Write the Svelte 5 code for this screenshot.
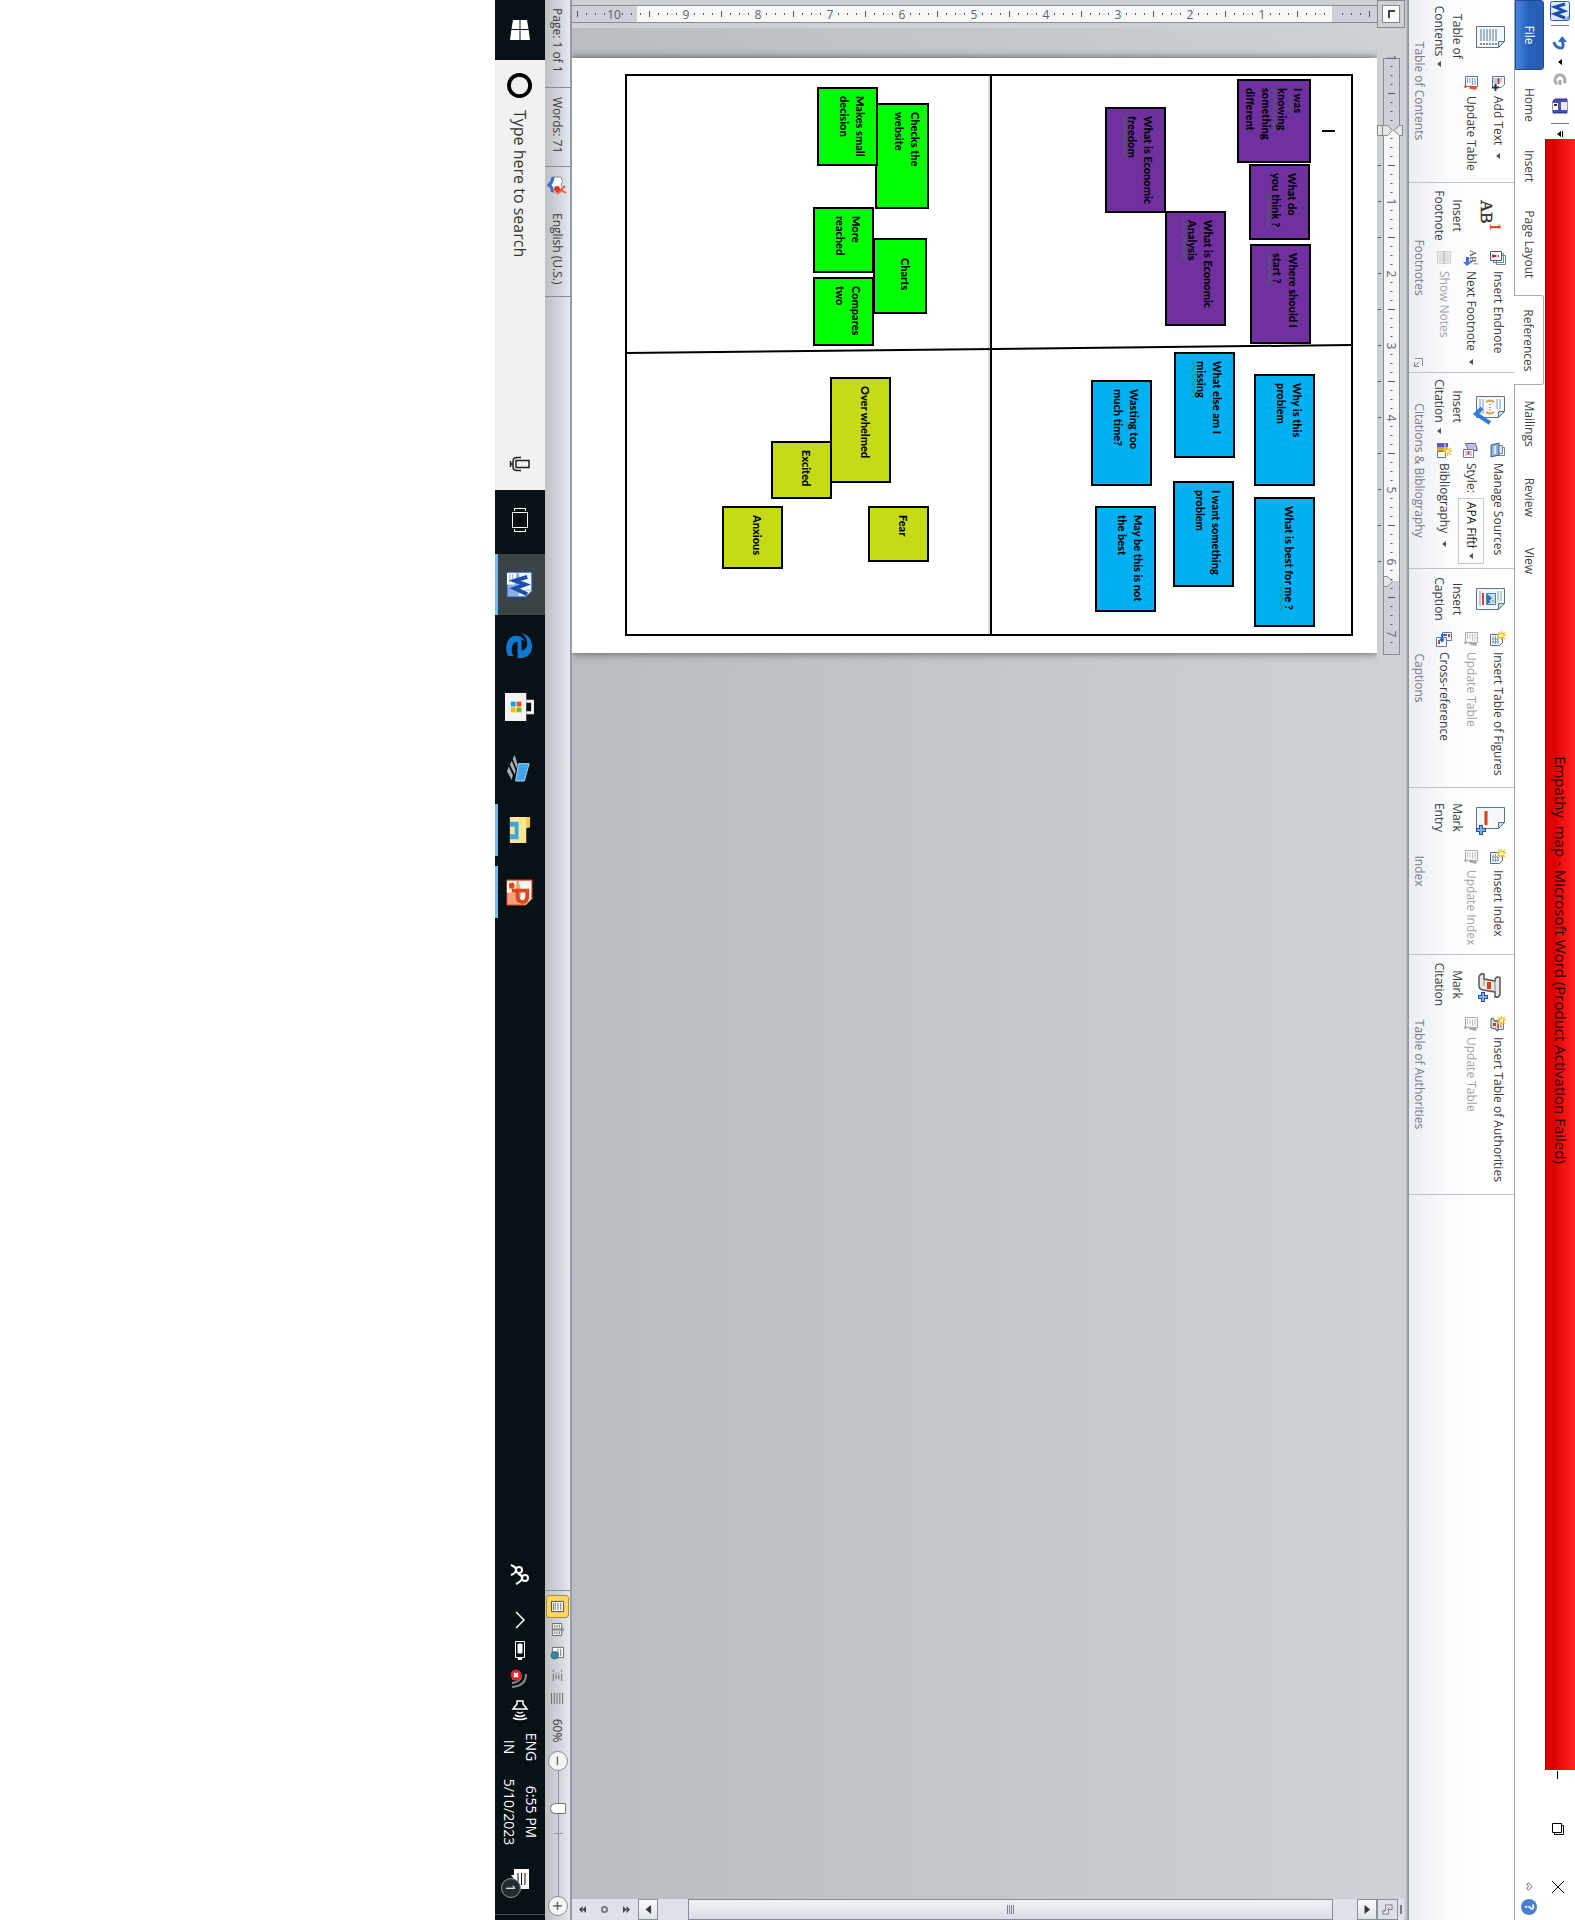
<script>
  const tabs = ['Home', 'Insert', 'Page Layout', 'References', 'Mailings', 'Review', 'View'];

  const groups = [
    {
      title: 'Table of Contents', width: 183, lead: 73, icon: 'toc', label: ['Table of', 'Contents'], menu: true,
      items: [{ icon: 'addtext', text: 'Add Text', menu: true }, { icon: 'update', text: 'Update Table' }]
    },
    {
      title: 'Footnotes', width: 190, lead: 65, icon: 'ab', label: ['Insert', 'Footnote'], launcher: true,
      items: [
        { icon: 'endnote', text: 'Insert Endnote' },
        { icon: 'next', text: 'Next Footnote', menu: true },
        { icon: 'notes', text: 'Show Notes', off: true }
      ]
    },
    {
      title: 'Citations & Bibliography', width: 196, lead: 67, icon: 'citation', label: ['Insert', 'Citation'], menu: true,
      items: [
        { icon: 'sources', text: 'Manage Sources' },
        { icon: 'style', text: 'Style:', select: true },
        { icon: 'biblio', text: 'Bibliography', menu: true }
      ]
    },
    {
      title: 'Captions', width: 219, lead: 60, icon: 'caption', label: ['Insert', 'Caption'],
      items: [
        { icon: 'figures', text: 'Insert Table of Figures' },
        { icon: 'update', text: 'Update Table', off: true },
        { icon: 'cross', text: 'Cross-reference' }
      ]
    },
    {
      title: 'Index', width: 167, lead: 59, icon: 'entry', label: ['Mark', 'Entry'],
      items: [{ icon: 'figures', text: 'Insert Index' }, { icon: 'update', text: 'Update Index', off: true }]
    },
    {
      title: 'Table of Authorities', width: 240, lead: 59, icon: 'scroll', label: ['Mark', 'Citation'],
      items: [{ icon: 'authorities', text: 'Insert Table of Authorities' }, { icon: 'update', text: 'Update Table', off: true }]
    }
  ];

  // x, y, w, h are board coordinates; "~" marks words flagged by the grammar checker
  const notes = [
    { c: 'purple', x: 3, y: 40, w: 84, h: 74, lines: ['I ~was', '~knowing', 'something', 'different'] },
    { c: 'purple', x: 88, y: 41, w: 76, h: 61, lines: ['What do', 'you ~think ?'] },
    { c: 'purple', x: 168, y: 40, w: 100, h: 61, lines: ['Where should I', '~start ?'] },
    { c: 'purple', x: 31, y: 185, w: 106, h: 61, lines: ['What is Economic', '~freedom'] },
    { c: 'purple', x: 135, y: 125, w: 115, h: 61, lines: ['What is Economic', '~Analysis'] },
    { c: 'blue', x: 298, y: 36, w: 112, h: 61, lines: ['Why is this', 'problem'] },
    { c: 'blue', x: 421, y: 36, w: 130, h: 61, lines: ['What is best for ~me ?'] },
    { c: 'blue', x: 276, y: 116, w: 106, h: 61, lines: ['What else am I', '~missing'] },
    { c: 'blue', x: 405, y: 117, w: 106, h: 61, lines: ['I want something', 'problem'] },
    { c: 'blue', x: 304, y: 199, w: 106, h: 61, lines: ['Wasting too', 'much time?'] },
    { c: 'blue', x: 430, y: 195, w: 106, h: 61, lines: ['May be this is not', 'the best'] },
    { c: 'green', x: 27, y: 422, w: 106, h: 54, lines: ['Checks the', 'website'] },
    { c: 'green', x: 11, y: 473, w: 79, h: 61, lines: ['Makes small', 'decision'] },
    { c: 'green', x: 162, y: 424, w: 76, h: 54, lines: ['Charts'], indent: true },
    { c: 'green', x: 131, y: 477, w: 66, h: 61, lines: ['More', 'reached'] },
    { c: 'green', x: 201, y: 477, w: 69, h: 61, lines: ['Compares', 'two'] },
    { c: 'lime', x: 301, y: 460, w: 106, h: 61, lines: ['Over whelmed'] },
    { c: 'lime', x: 365, y: 519, w: 58, h: 61, lines: ['Excited'] },
    { c: 'lime', x: 430, y: 422, w: 56, h: 61, lines: ['Fear'] },
    { c: 'lime', x: 430, y: 568, w: 63, h: 61, lines: ['Anxious'] }
  ];

  const hTicks = Array.from({ length: 66 }, (_, i) => ({ at: 9 * i, kind: i % 8 }));
  const vTicks = Array.from({ length: 90 }, (_, i) => ({ at: 7 + 9 * i, n: (i - 4) / 8 }));
  const tabStops = Array.from({ length: 12 }, (_, i) => 108 + 36 * i);
  const views = ['print', 'reading', 'web', 'outline', 'draft'];
  let zoom = $state(60);
  let search = $state('');
</script>

{#snippet star()}
  <path d="M4 0v9M0 4.500h9M1 1l7 7M8 1l-7 7" stroke="#f2c530" stroke-width="1.500" /><rect x="3" y="3" width="3" height="3" fill="#fff3b0" />
{/snippet}

{#snippet small(name)}
  <svg class="i16" viewBox="0 0 16 16" fill="none" aria-hidden="true">
    {#if name === 'addtext'}
      <path d="M1.500 1.500h8l3 3v9h-11z" fill="#f5f9fe" stroke="#66788f" /><path d="M3 5h4M3 10h8M3 12h5" stroke="#7f9cc4" /><path d="M3 7.500h6" stroke="#d22" stroke-width="2" /><path d="M12.500 7v7M9 10.500h7" stroke="#2b3340" stroke-width="2" />
    {:else if name === 'update'}
      <path d="M1.500 1.500h10v12h-10z" fill="#f5f9fe" stroke="#66788f" /><path d="M3 4h7M3 6.500h7M3 9h5M3 11.500h5" stroke="#7f9cc4" /><path d="M13.500 2.500l-1.500 7M11.500 12.500v2" stroke="#e8502a" stroke-width="3" />
    {:else if name === 'endnote'}
      <path d="M5.500.5h9v9h-9zM3.500 2.500h9v10h-9z" fill="#fff" stroke="#6c82a6" /><path d="M1.500 4.500h9v11h-9z" fill="#fff" stroke="#44597c" /><path d="M6 7v1M6 9.500v3.500M4.500 13h3" stroke="#c22" stroke-width="2" />
    {:else if name === 'next'}
      <text x="0" y="9" font-family="Liberation Serif" font-size="9" fill="#222">AB</text><text x="12" y="5" font-family="Liberation Serif" font-size="7" fill="#e14a20">1</text><path d="M7 10h5v-3l4 5-4 4v-3h-5z" fill="#3f77cf" />
    {:else if name === 'notes'}
      <path d="M1.500 1.500h12v13h-12z" fill="#e8e8e8" stroke="#b5b5b5" /><path d="M3 4h9M3 6h9M3 10h9M3 12h9" stroke="#b9b0b3" /><path d="M1 8h13" stroke="#a9a9a9" stroke-width="2" />
    {:else if name === 'sources'}
      <path d="M5.500 1.500h8v8h-8z" fill="#fff" stroke="#6a84a8" /><path d="M3.500 3.500h8v8h-8z" fill="#eaf2fb" stroke="#6a84a8" /><path d="M1 7h12l2 8H3z" fill="#8fb1d8" stroke="#3e5f8a" /><path d="M4 11h8" stroke="#dbe8f6" stroke-width="2" />
    {:else if name === 'style'}
      <path d="M1.500 3.500l7-2v9l-7 3z" fill="#b9bfe6" stroke="#5b629c" /><path d="M7.500 5.500h8v10h-8z" fill="#fff" stroke="#6d7892" /><path d="M9 8h5M9 13h5" stroke="#8b98b4" /><path d="M9 10.500h4" stroke="#d33" stroke-width="2" />
    {:else if name === 'biblio'}
      <path d="M9.500 6.500h6v8h-6z" fill="#fff" stroke="#5f7393" /><rect x="1" y="4" width="4" height="11" fill="#5f59bd" /><rect x="5" y="4" width="4" height="11" fill="#d9a520" /><path d="M1 7h8" stroke="#fff6" stroke-width="2" /><g transform="translate(5 0)">{@render star()}</g>
    {:else if name === 'figures'}
      <path d="M3.500 3.500h8l3 3v9h-11z" fill="#fff" stroke="#54688a" /><path d="M5 8h8M5 10.500h8M5 13h8M8 7v7M11 7v7" stroke="#7f95bb" />{@render star()}
    {:else if name === 'cross'}
      <path d="M1.500.5h8v9h-8z" fill="#fff" stroke="#5b7bb2" /><path d="M6.500 5.500h9v10h-9z" fill="#fff" stroke="#5b7bb2" /><path d="M3 3h3" stroke="#e33" stroke-width="2" /><path d="M9 13h4" stroke="#e33" stroke-width="2" /><path d="M4 5v5h6M8 8l2 2-2 2" stroke="#2d68c8" stroke-width="2" />
    {:else if name === 'authorities'}
      <path d="M4.500 2.500h9v8h-9z" fill="#fff" stroke="#5b7bb2" /><path d="M7 5h5M7 7.500h5" stroke="#e33" /><path d="M5 8h10q0 2-2 2l-1 5H3q-2-1 0-3h2z" fill="#ddd" stroke="#555" /><path d="M7 11.500h3" stroke="#d63f1c" stroke-width="3" />{@render star()}
    {/if}
  </svg>
{/snippet}

{#snippet sheet()}
  <path d="M5.500 1.500h15l6 6v22h-21z" fill="#f4f9fe" stroke="#5d7389" /><path d="M20.500 1.500v6h6z" fill="#c8dcf2" stroke="#5d7389" />
{/snippet}

{#snippet big(name)}
  <svg class="i32" viewBox="0 0 32 32" fill="none" aria-hidden="true">
    {#if name === 'toc'}
      {@render sheet()}<path d="M8 10h12M8 13h12M8 16h12M8 19h12M8 22h12M8 25h12" stroke="#54718f" /><path d="M22 10h2M22 13h2M22 16h2M22 19h2M22 22h2M22 25h2" stroke="#222" />
    {:else if name === 'ab'}
      <text x="0" y="25" font-family="Liberation Serif" font-size="17" fill="#333" stroke="#333" stroke-width=".5">AB</text><text x="23" y="16" font-family="Liberation Serif" font-weight="bold" font-size="16" fill="#e14a20">1</text>
    {:else if name === 'citation'}
      {@render sheet()}<path d="M8 6h10M8 9h10M8 23h15M8 26h15" stroke="#7d9cc0" /><path d="M11 12q-3 4 0 8M21 12q3 4 0 8M13 16h1M16 16h1M18.500 16h1" stroke="#e79636" stroke-width="2" /><path d="M17 24l6 6 9-14" stroke="#2f7fdc" stroke-width="4" />
    {:else if name === 'caption'}
      {@render sheet()}<path d="M8 5h10M8 8h10M8 26h15" stroke="#7d9cc0" /><path d="M10.500 10.500h11v9h-11z" fill="#bfe3fa" stroke="#4c84b5" /><path d="M11 19l4-5 3 3 1-2 2 4z" fill="#2c6db0" /><circle cx="18" cy="13" r="1" fill="#e79636" /><path d="M10 23h12" stroke="#d8441e" stroke-width="2" />
    {:else if name === 'entry'}
      {@render sheet()}<path d="M9 20h14" stroke="#d9400f" stroke-width="3" /><path d="M28 20v10M23 25h10" stroke="#27509c" stroke-width="4" /><path d="M28 21v8M24 25h8" stroke="#7fb0f2" stroke-width="2" />
    {:else if name === 'scroll'}
      <path d="M10 6h15q4 1 3 5h-5l-2 12q-1 4-4 4H8q-4-1-3-5h5l2-11q-4 0-4-3t2-2z" fill="#e8e8e8" stroke="#555" stroke-width="1.500" /><path d="M12 11h11M10 22h7" stroke="#888" /><path d="M13 17h7" stroke="#d9400f" stroke-width="4" /><path d="M28 18v10M23 23h10" stroke="#27509c" stroke-width="4" /><path d="M28 19v8M24 23h8" stroke="#7fb0f2" stroke-width="2" />
    {/if}
  </svg>
{/snippet}

{#snippet office(letter, a, b)}
  <svg viewBox="0 0 28 28" class="i28" fill="none" aria-hidden="true">
    <path d="M1 1h19l7 7v19H1z" fill={b} stroke={a} /><path d="M2 2h17l7 7v6Q14 10 2 15z" fill="#f2f5fb" /><path d="M20 1v7h7z" fill="#fff" stroke={b} /><path d="M2 17l12 2v8H2z" fill="#fff" /><path d="M3 21h9M3 24h9" stroke={b} />
    {#if letter === 'W'}
      <path d="M6 6l4 13 4-11 4 11 6-13" stroke={a} stroke-width="4" />
    {:else}
      <path d="M12 22V6h6q6 0 6 5t-6 5h-5" stroke={a} stroke-width="4" /><circle cx="7" cy="22" r="3" fill={a} />
    {/if}
  </svg>
{/snippet}

<div class="stage">
  <main class="screen">
    <header class="title">
      <div class="quick">
        <svg class="wlogo" viewBox="0 0 20 20" fill="none" aria-hidden="true"><rect x=".5" y=".5" width="19" height="19" rx="2" fill="#dcebfa" stroke="#2a5db0" /><path d="M14 1h5v5z" fill="#7fa8dc" /><path d="M3 5l3 10 4-9 3 9 4-10" stroke="#1d4f9f" stroke-width="3" /></svg>
        <i></i>
        <button aria-label="Undo"><svg class="i16" viewBox="0 0 16 16" fill="none"><path d="M5 6q9-3 8 2-1 5-6 6" stroke="#3569be" stroke-width="3" /><path d="M1 6l6-5v9z" fill="#3569be" /></svg></button>
        <button aria-label="Undo list" class="arrow"><svg viewBox="0 0 6 4"><path d="M0 0h6L3 4z" /></svg></button>
        <button aria-label="Redo"><svg class="i16" viewBox="0 0 16 16" fill="none"><path d="M12 11a5 5 0 1 1-1-7M13 8h-5" stroke="#aaa" stroke-width="3" /></svg></button>
        <button aria-label="Save"><svg class="i16" viewBox="0 0 16 16"><path d="M1 1h14v14H3l-2-2z" fill="#4b50b8" stroke="#2d3180" /><path d="M4 1h8v6H4z" fill="#e9ecf8" /><path d="M5 10h7v5H5z" fill="#fff" /><path d="M6 11h2v3H6z" fill="#333" /></svg></button>
        <i></i>
        <button aria-label="Customize" class="arrow"><svg viewBox="0 0 6 6"><path d="M0 0h6v1H0zM0 2h6L3 6z" /></svg></button>
      </div>
      <h1>Empathy  map - Microsoft Word (Product Activation Failed)</h1>
      <div class="winbtns">
        <button aria-label="Minimize"><svg class="i12" viewBox="0 0 12 12"><path d="M4 6.500h8" stroke="#000" /></svg></button>
        <button aria-label="Restore"><svg class="i12" viewBox="0 0 12 12" fill="none" stroke="#000"><path d="M.5 2.500h9v9h-9zM2.500 2V.5h9v9H10" /></svg></button>
        <button aria-label="Close"><svg class="i12" viewBox="0 0 12 12" stroke="#000"><path d="M0 0l12 12M12 0L0 12" /></svg></button>
      </div>
    </header>

    <nav class="tabs">
      <button class="file">File</button>
      {#each tabs as tab}
        <button class="tab" class:active={tab === 'References'}>{tab}</button>
      {/each}
      <span class="fill"></span>
      <button class="mini" aria-label="Minimize ribbon"><svg viewBox="0 0 10 8" class="chev" fill="#fff" stroke="#555"><path d="M1 5l4-4 4 4-1.500 2L5 5 2.500 7z" /></svg></button>
      <button class="mini help" aria-label="Help">?</button>
    </nav>

    <section class="ribbon">
      {#each groups as g}
        <div class="group" style:width="{g.width}px" style:--lead="{g.lead}px">
          <button class="large">
            {@render big(g.icon)}
            <span>{g.label[0]}</span>
            <span>{g.label[1]}{#if g.menu}<b class="dd"></b>{/if}</span>
          </button>
          <div class="stack">
            {#each g.items as item}
              {#if item.select}
                <div class="row">
                  {@render small(item.icon)}
                  <label for="style">{item.text}</label>
                  <span class="pick"><select id="style"><option>APA Fifth Edition</option></select><b class="dd"></b></span>
                </div>
              {:else}
                <button class="row" class:off={item.off}>
                  {@render small(item.icon)}<span>{item.text}</span>{#if item.menu}<b class="dd"></b>{/if}
                </button>
              {/if}
            {/each}
          </div>
          <div class="caption">
            <span>{g.title}</span>
            {#if g.launcher}
              <button aria-label="Footnote options"><svg class="i9" viewBox="0 0 9 9" fill="none" stroke="#888"><path d="M.5 8V.5H8M4 4l4 4M8.500 4v4.500H4" /></svg></button>
            {/if}
          </div>
        </div>
      {/each}
    </section>

    <section class="work">
      <div class="corner"><button aria-label="Tab selector"><svg viewBox="0 0 10 10" fill="none"><path d="M2 1v6h7" stroke="#444" stroke-width="2" /></svg></button></div>
      <div class="top">
        <svg class="hruler" viewBox="0 0 600 27" fill="none">
          <rect x="1.500" y="4.500" width="596" height="16" fill="#cdd0d6" stroke="#868b94" />
          <rect x="73" y="5" width="451" height="15" fill="#f7f7f7" />
          {#each hTicks as t}
            {#if t.kind === 0}
              <text x={t.at + 1} y="17">{Math.abs(t.at / 72 - 1) || ''}</text>
            {:else if t.kind === 4}
              <path d="M{t.at + 0.5} 9v7" stroke="#555" />
            {:else}
              <path d="M{t.at} 12.500h1" stroke="#555" stroke-width="2" />
            {/if}
          {/each}
          {#each tabStops as s}<path d="M{s + .5} 23v3" stroke="#555" />{/each}
          <path d="M68.500 1.500h10v3l-5 6-5-6z M68.500 26.500v-10l5-5 5 5v10zM68.500 21.500h10M519.500 20.500v-4l5-5 5 5v4z" fill="#e6e6e6" stroke="#888" />
        </svg>
      </div>
      <div class="left">
        <svg class="vruler" viewBox="0 0 18 805" preserveAspectRatio="xMidYMin slice" fill="none">
          <rect x=".5" y="-2" width="17" height="820" fill="#cdd0d6" stroke="#868b94" />
          <rect x="1" y="45" width="16" height="695" fill="#f7f7f7" />
          {#each vTicks as t}
            {#if Number.isInteger(t.n)}
              {#if t.n > 0}<text transform="translate(14 {t.at}) rotate(-90)">{t.n}</text>{/if}
            {:else if Number.isInteger(t.n + .5)}
              <path d="M6 {t.at + .5}h6" stroke="#555" />
            {:else}
              <path d="M8 {t.at + .5}h2" stroke="#555" />
            {/if}
          {/each}
        </svg>
      </div>
      <div class="canvas">
        <article class="page">
          <div class="board">
            <svg class="lines" viewBox="0 0 558 724" preserveAspectRatio="none"><path d="M0 362h558" stroke="#ddd" stroke-width="2" /><path d="M0 360h558" stroke="#000" stroke-width="2" /><path d="M269 0L277 725" stroke="#000" stroke-width="2" /></svg>
            <span class="caret"></span>
            {#each notes as n}
              <div class="note {n.c}" class:tall={n.lines.length > 2} class:indent={n.indent} style:left="{n.x}px" style:top="{n.y}px" style:width="{n.w}px" style:height="{n.h}px">
                {#each n.lines as line}
                  <p>{line.split('~')[0]}{#if line.includes('~')}<u>{line.split('~')[1]}</u>{/if}</p>
                {/each}
              </div>
            {/each}
          </div>
        </article>
      </div>
      <aside class="scroll">
        <span class="split"></span>
        <button aria-label="View ruler" class="toggle"><svg viewBox="0 0 12 12" fill="#f0e8ee" stroke="#777"><path d="M1 1h5v4h5v6H7V8H1zM3 3l3 3M6 8l3 2" /></svg></button>
        <button aria-label="Scroll up"><svg viewBox="0 0 12 8"><path d="M1 7h10L6 1z" fill="#333" /></svg></button>
        <span class="track"><span class="thumb"><em></em></span></span>
        <button aria-label="Scroll down"><svg viewBox="0 0 12 8"><path d="M1 1h10L6 7z" fill="#333" /></svg></button>
        <button class="plain" aria-label="Previous page"><svg viewBox="0 0 8 8"><path d="M0 4l4-4 4 4zM0 8l4-4 4 4z" fill="#444" /></svg></button>
        <button class="plain" aria-label="Select browse object"><svg viewBox="0 0 8 8"><circle cx="4" cy="4" r="3" fill="#ddd" stroke="#777" stroke-width="2" /></svg></button>
        <button class="plain" aria-label="Next page"><svg viewBox="0 0 8 8"><path d="M0 0l4 4 4-4zM0 4l4 4 4-4z" fill="#444" /></svg></button>
      </aside>
    </section>

    <footer class="status">
      <button class="s1">Page: 1 of 1</button>
      <button class="s2">Words: 71</button>
      <button class="s3"><svg class="i20" viewBox="0 0 20 20" fill="none"><path d="M2 6q4-3 8 0 4-3 7 0v9q-4-2-7 1-4-3-8-1z" fill="#fff" stroke="#8a8f98" /><path d="M2 14q4 0 8 4 3-4 7-3" stroke="#3f6cc8" stroke-width="3" /><path d="M11 2l8 8M18 1l-6 10" stroke="#f4593a" stroke-width="2" /><circle cx="14" cy="10" r="3" fill="#e0371f" /></svg><span>English (U.S.)</span></button>
      <span class="fill"></span>
      <span class="views">
        {#each views as v}
          <button aria-label="{v} view" class:on={v === 'print'}>
            <svg class="i14" viewBox="0 0 14 14" fill="none" stroke="#666">
              {#if v === 'print'}<path d="M1.500.5h11v13h-11z" fill="#fff" stroke="#444" /><path d="M3 3.500h8M3 6.500h8M3 9.500h8M3 11.500h8" />
              {:else if v === 'reading'}<path d="M.5 2.500h6v10h-6zM7.500 2.500h6v10h-6z" fill="#f3f3f3" /><path d="M2 5h3M2 7.500h3M2 10h3M9 5h3M9 7.500h3M9 10h3M5 1h4" />
              {:else if v === 'web'}<path d="M1.500.5h11v12h-11z" fill="#fff" /><path d="M3 3.500h8M3 6.500h8" /><circle cx="10" cy="10" r="4" fill="#3c83b5" stroke="#2d7a4f" />
              {:else if v === 'outline'}<path d="M1 2.500h2M5 2.500h8M4 5.500h1M6 5.500h5M4 8.500h1M6 8.500h5M1 11.500h2M5 11.500h8" />
              {:else}<path d="M1 1.500h12M1 4.500h12M1 7.500h12M1 10.500h12M1 13.500h12" />{/if}
            </svg>
          </button>
        {/each}
      </span>
      <span class="pct">{zoom}%</span>
      <button class="round" aria-label="Zoom out" onclick={() => (zoom -= 10)}>−</button>
      <span class="slider"><input type="range" min="10" max="190" bind:value={zoom} aria-label="Zoom" /></span>
      <button class="round" aria-label="Zoom in" onclick={() => (zoom += 10)}>+</button>
    </footer>

    <footer class="taskbar">
      <button class="start" aria-label="Start"><svg viewBox="0 0 20 20" fill="#fff"><path d="M0 3l9-1.500v8H0zM10 1.300L20 0v9.500H10zM0 10.500h9v8L0 17zM10 10.500h10V20l-10-1.300z" /></svg></button>
      <label class="search">
        <svg viewBox="0 0 28 28" class="i28"><circle cx="14" cy="14" r="11" fill="none" stroke="#000" stroke-width="4" /></svg>
        <input type="text" bind:value={search} placeholder="Type here to search" aria-label="Search" />
        <svg viewBox="0 0 16 20" class="mic" fill="none" stroke="#222" stroke-width="1.500"><rect x="4.500" y="1" width="7" height="13" /><path d="M1.500 9v4q0 4 4 4h5q4 0 4-4V9M8 17v3M5 19.500h6" /></svg>
      </label>
      <button class="view" aria-label="Task view"><svg viewBox="0 0 24 18" fill="none" stroke="#fff"><path d="M4.500 1.500h15v15h-15zM3 3.500H.5v11H3M21 3.500h2.500v11H21" /></svg></button>
      <button class="app word" aria-label="Word">{@render office('W', '#1d4fa8', '#8fb0de')}</button>
      <button class="app" aria-label="Edge"><svg viewBox="0 0 28 28" class="i28"><path d="M1 12C3 4 9 1 15 1c8 0 12 6 12 12v3H10c0 6 9 8 15 4v6C15 30 4 27 4 17c0-4 3-7 6-9-1 1-2 3-2 4h11c0-7-12-9-18 0z" fill="#0d79d6" /></svg></button>
      <button class="app" aria-label="Store"><svg viewBox="0 0 30 30" class="i30" fill="none"><path d="M9.500 8V1.500h12V8" stroke="#eee" stroke-width="3" /><path d="M1 8h29v22H1z" fill="#f4f4f4" /><path d="M10 13h5v5h-5z" fill="#f25022" /><path d="M16 13h5v5h-5z" fill="#7fba00" /><path d="M10 19h5v5h-5z" fill="#00a4ef" /><path d="M16 19h5v5h-5z" fill="#ffb900" /></svg></button>
      <button class="app" aria-label="Connect"><svg viewBox="0 0 28 28" class="i28"><path d="M10 4l18 5v9l-18-3z" fill="#41a5ee" stroke="#a7d5f5" /><path d="M1 19l10-3 4 1-10 4zM7 22l10-4 4 1-10 5zM13 25l9-4 5 1-9 5z" fill="#a8adb2" /></svg></button>
      <button class="app run" aria-label="File Explorer"><svg viewBox="0 0 28 24" class="i28"><path d="M0 3h10l2 2h15v17H0z" fill="#ffe694" /><path d="M0 1h11v4H0z" fill="#f3c94c" /><path d="M5 22v-9h18v9h-5v-5h-8v5z" fill="#3aa7e0" /></svg></button>
      <button class="app run" aria-label="PowerPoint">{@render office('P', '#d8491c', '#f2a27e')}</button>
      <span class="fill"></span>
      <div class="tray">
        <button class="t1" aria-label="People"><svg viewBox="0 0 20 20" class="i20" fill="none" stroke="#fff" stroke-width="2"><circle cx="5" cy="11" r="3" /><circle cx="13" cy="5" r="3" /><path d="M0 19q2-5 5-5t5 5M9 12q1-4 4-4t6 6" /></svg></button>
        <button class="t2" aria-label="Hidden icons"><svg viewBox="0 0 16 10" class="i16" fill="none" stroke="#fff" stroke-width="1.500"><path d="M0 9l8-8 8 8" /></svg></button>
        <button class="t3" aria-label="Battery"><svg viewBox="0 0 20 12" class="i20" fill="none" stroke="#fff"><path d="M1.500 1.500h16v9h-16z" /><path d="M4 4h9v4H4z" fill="#fff" /><path d="M19 4v4" stroke-width="2" /></svg></button>
        <button class="t3" aria-label="Network"><svg viewBox="0 0 20 20" class="i20" fill="none" stroke="#888" stroke-width="2"><path d="M4 4q12 0 13 14M5 9q7 0 8 9M6 14q3 0 3 4" /><circle cx="5" cy="14" r="5.500" fill="#e0202c" stroke="none" /><path d="M3 12l4 4M7 12l-4 4" stroke="#fff" /></svg></button>
        <button class="t3" aria-label="Volume"><svg viewBox="0 0 20 18" class="i20" fill="none" stroke="#fff" stroke-width="1.500"><path d="M1 6h3l5-4v14l-5-4H1zM12 6q2 3 0 6M15 4q3 5 0 10M18 2q3 7 0 14" /></svg></button>
        <button class="lang"><span>ENG</span><span>IN</span></button>
        <button class="clock"><span>6:55 PM</span><span>5/10/2023</span></button>
        <button class="action" aria-label="Notifications"><svg viewBox="0 0 20 18"><path d="M0 0h20v15H10l-4 3v-3H0z" fill="#fff" /><path d="M4 4h12M4 7.500h12M4 11h12" stroke="#111" /></svg><span class="badge">1</span></button>
        <span class="peek"></span>
      </div>
    </footer>
  </main>
</div>

<style>
  :global(body) { margin: 0; background: #fff; }
  .stage { width: 100vw; height: 100vh; overflow: hidden; }
  .screen {
    box-sizing: border-box; width: 100vh; aspect-ratio: 16 / 9; display: flex; flex-direction: column;
    transform: translateX(100vw) rotate(90deg); transform-origin: top left;
    font-family: 'Open Sans', 'Noto Sans', sans-serif; font-size: 12px; line-height: 18px; color: #3c3c3c;
  }
  button { font: inherit; color: inherit; background: none; border: 0; padding: 0; margin: 0; display: flex; align-items: center; justify-content: center; white-space: nowrap; }
  svg { display: block; flex: none; overflow: visible; }
  .fill { flex: 1; }
  .i9 { width: 9px; height: 9px; }
  .i12 { width: 12px; height: 12px; }
  .i14 { width: 13px; height: 13px; }
  .i16 { width: 16px; height: 16px; }
  .i20 { width: 20px; height: 20px; }
  .i28 { width: 27px; height: 27px; }
  .i30 { width: 29px; height: 29px; }
  .i32 { width: 32px; height: 32px; }

  .title { display: flex; height: 30px; flex: none; }
  .quick { width: 139px; display: flex; align-items: center; flex: none; padding-left: 1px; box-sizing: border-box; }
  .wlogo { width: 20px; height: 20px; }
  .quick i { width: 1px; height: 18px; background: #777; margin: 0 4px; }
  .quick button { width: 26px; }
  .quick .arrow { width: 11px; }
  .quick .arrow svg { width: 6px; }
  h1 { flex: 1; margin: 0; padding-left: 11px; font-size: 15px; line-height: 29px; font-weight: 400; color: #1c0000; text-align: center; white-space: pre; background: linear-gradient(#ff2222, #f41212 40%, #d90000 75%); border-bottom: 1px solid #a80000; box-sizing: border-box; }
  .winbtns { width: 150px; display: flex; align-items: center; flex: none; padding-top: 4px; box-sizing: border-box; }
  .winbtns button { width: 58px; }
  .winbtns button:first-child { width: 30px; padding-right: 24px; box-sizing: border-box; }

  .tabs { display: flex; height: 31px; flex: none; box-sizing: border-box; border-bottom: 1px solid #9fa4aa; padding-top: 1px; }
  .tabs button { height: 29px; color: #444; }
  .tabs .file { width: 70px; box-sizing: border-box; margin-right: 4px; color: #fff; border-radius: 3px 3px 0 0; border: 1px solid #1c4a9c; background: linear-gradient(#2c5eb4, #2560b8 50%, #4684dc); }
  .tab { padding: 0 14px; }
  .tabs .active { height: 30px; margin-left: 3px; background: #fff; border: 1px solid #a9adb3; border-bottom: 0; border-radius: 3px 3px 0 0; padding: 0 13px; }
  .active ~ .tab { padding: 0 15px; margin-right: 1px; }
  .tabs .mini { padding: 0; width: 24px; }
  .chev { width: 9px; }
  .tabs .help { width: 16px; height: 16px; border-radius: 8px; background: #4a7fd0; color: #fff; font-weight: 700; margin: 7px 5px 0 1px; }

  .ribbon { display: flex; height: 105px; flex: none; background: linear-gradient(#fff 30%, #fafbfc 65%, #ebedf1); }
  .group { flex: none; box-sizing: border-box; border-right: 1px solid #bfc3c9; display: grid; grid-template-columns: var(--lead) 1fr; grid-template-rows: 85px 20px; column-gap: 2px; }
  .large { flex-direction: column; justify-content: flex-start; padding-top: 8px; }
  .large .i32 { margin-bottom: 8px; }
  .large span { display: flex; align-items: center; }
  .stack { padding-top: 2px; }
  .row { display: flex; align-items: center; height: 27px; gap: 5px; }
  .off { color: #a5a2a6; }
  .off .i16 { filter: grayscale(1) opacity(.6); }
  .dd { display: inline-block; border: 3px solid transparent; border-top: 4px solid #555; border-bottom: 0; margin-left: 5px; }
  .row > .dd { margin-left: 3px; }
  .pick { display: flex; align-items: center; width: 66px; height: 26px; box-sizing: border-box; border: 1px solid #c6c9ce; background: #fff; }
  .pick .dd { margin: 0 5px; }
  select { appearance: none; border: 0; background: none; font: inherit; color: #111; padding: 0 0 0 3px; width: 49px; overflow: hidden; text-overflow: clip; }
  .caption { grid-column: 1 / 3; width: 100%; display: flex; align-items: center; color: #777d87; }
  .caption span { flex: 1; text-align: center; }
  .caption button { width: 20px; }

  .work { flex: 1; min-height: 0; display: grid; grid-template-columns: 28px 1fr 21px; grid-template-rows: 32px 1fr; background: linear-gradient(#ced1d6, #b9bcc1); border-bottom: 2px solid #949ca8; box-shadow: inset 0 2px 2px #8e939b; }
  .corner { display: flex; align-items: center; justify-content: center; border: 1px solid #858a92; box-sizing: border-box; margin-top: 4px; background: #cdd1d6; }
  .corner button { width: 18px; height: 18px; border: 1px solid #858a92; background: #fafafa; box-sizing: border-box; }
  .corner svg { width: 10px; }
  .top { padding: 5px 0 0 29px; }
  .hruler { width: 600px; height: 27px; }
  .hruler text, .vruler text { font-size: 12px; fill: #5f6170; text-anchor: middle; }
  .left { padding: 0 5px; background: #cdd0d5; overflow: hidden; min-height: 0; }
  .vruler { width: 18px; height: 100%; overflow: hidden; }
  .canvas { padding-left: 30px; overflow: hidden; display: flex; min-height: 0; }
  .page { width: 595px; box-sizing: border-box; background: #fff; box-shadow: 0 0 8px #0009; padding: 24px 16px 0; border: 0; }
  .board { position: relative; box-sizing: border-box; width: 562px; height: 728px; border: 2px solid #000; }
  .lines { width: 100%; height: 100%; }
  .caret { position: absolute; left: 54px; top: 16px; width: 2px; height: 13px; background: #000; }
  .note { position: absolute; box-sizing: border-box; border: 2px solid #000; display: flex; flex-direction: column; justify-content: center; padding: 0 0 10px 7px; font: 900 11px/16px Lato, 'Open Sans', sans-serif; color: #000; }
  .note p { margin: 0; white-space: nowrap; }
  .note u { text-decoration: underline wavy #1f8a3a 1px; text-underline-offset: 1px; text-decoration-skip-ink: none; }
  .tall { padding-bottom: 0; }
  .indent { padding-left: 18px; }
  .purple { background: #7030a0; }
  .blue { background: #00b0f0; }
  .green { background: #00ff00; }
  .lime { background: #c6db17; }

  .scroll { grid-column: 3; grid-row: 1 / 3; display: flex; flex-direction: column; align-items: stretch; background: #dde1ea; margin-top: 5px; min-height: 0; }
  .split { height: 2px; margin: 2px 6px; background: #777c84; }
  .scroll button { height: 20px; flex: none; border: 1px solid #8a9099; box-sizing: border-box; background: linear-gradient(90deg, #fafbfc, #dfe2e8); }
  .scroll button svg { width: 11px; }
  .scroll .toggle { height: 21px; background: #dde1e6; }
  .scroll .plain { border: 0; background: none; height: 22px; }
  .scroll .plain svg { width: 7px; }
  .track { flex: 1; padding: 24px 0 30px; display: flex; }
  .thumb { flex: 1; border: 1px solid #868e99; background: linear-gradient(90deg, #f0f2f6, #dadde5); display: flex; align-items: center; justify-content: center; }
  .thumb em { width: 9px; height: 8px; background: repeating-linear-gradient(#7b808a 0 1px, transparent 1px 2px); }

  .status { display: flex; height: 25px; flex: none; align-items: center; padding-right: 4px; background: linear-gradient(#e6e9ee, #d3d6dc 40%, #bcbfc4); }
  .status > button { height: 25px; }
  .status .s1, .status .s2, .status .s3 { border-right: 1px solid #888d95; justify-content: flex-start; box-sizing: border-box; }
  .status .s1 { width: 88px; padding-left: 8px; }
  .status .s2 { width: 79px; padding-left: 9px; }
  .status .s3 { width: 130px; padding-left: 8px; gap: 18px; }
  .views { display: flex; border-left: 1px solid #888d95; padding-left: 4px; height: 25px; align-items: center; }
  .views button { width: 23px; height: 23px; box-sizing: border-box; }
  .views .on { border: 1px solid #b48a2c; border-radius: 3px; background: #fbd667; }
  .pct { width: 41px; text-align: center; }
  .status .round { width: 20px; height: 20px; margin-bottom: 2px; border-radius: 10px; border: 1px solid #868d98; background: #f4f5f7; box-sizing: border-box; font-size: 18px; line-height: 16px; color: #555; }
  .slider { width: 125px; height: 23px; margin-bottom: 2px; display: flex; align-items: center; background: linear-gradient(#8d96a3, #8d96a3) 62px 50% / 1px 9px no-repeat; }
  input[type='range'] { appearance: none; width: 100%; margin: 0; height: 16px; background: linear-gradient(#8d96a3, #8d96a3) 0 50% / 100% 1px no-repeat; }
  input[type='range']::-webkit-slider-thumb { appearance: none; width: 11px; height: 16px; background: #fff; border: 1px solid #6f7986; box-sizing: border-box; border-radius: 1px 1px 6px 6px; }

  .taskbar { display: flex; height: 50px; flex: none; background: #081116; color: #fff; }
  .start { width: 60px; }
  .start svg { width: 20px; }
  .search { width: 430px; box-sizing: border-box; background: #f1f1f1; display: flex; align-items: center; padding: 0 18px 0 12px; }
  .search input { flex: 1; border: 0; background: none; outline: 0; font: 16px/22px 'Open Sans', sans-serif; padding: 0 0 0 11px; }
  .search input::placeholder { color: #333; opacity: 1; }
  .mic { width: 16px; height: 20px; }
  .view { width: 64px; padding-right: 4px; }
  .view svg { width: 24px; }
  .app { width: 61px; border-bottom: 3px solid transparent; padding-top: 3px; box-sizing: border-box; }
  .word { background: #3b4346; border-bottom-color: #76b9ed; }
  .run { width: 52px; margin: 0 4px 0 6px; border-bottom-color: #76b9ed; }
  .tray { display: flex; }
  .t1 { width: 60px; }
  .t2 { width: 30px; }
  .t3 { width: 30px; }
  .lang, .clock { flex-direction: column; font-size: 14px; line-height: 22px; }
  .lang { width: 44px; }
  .clock { width: 86px; }
  .action { box-sizing: border-box; width: 58px; margin-right: 1px; padding-right: 10px; position: relative; }
  .action svg { width: 20px; }
  .badge { position: absolute; left: 23px; top: 24px; width: 20px; height: 20px; box-sizing: border-box; border: 1px solid #999; border-radius: 10px; background: #222b2e; font-size: 13px; line-height: 18px; }
  .peek { width: 5px; border-left: 1px solid #4a5256; }
</style>
